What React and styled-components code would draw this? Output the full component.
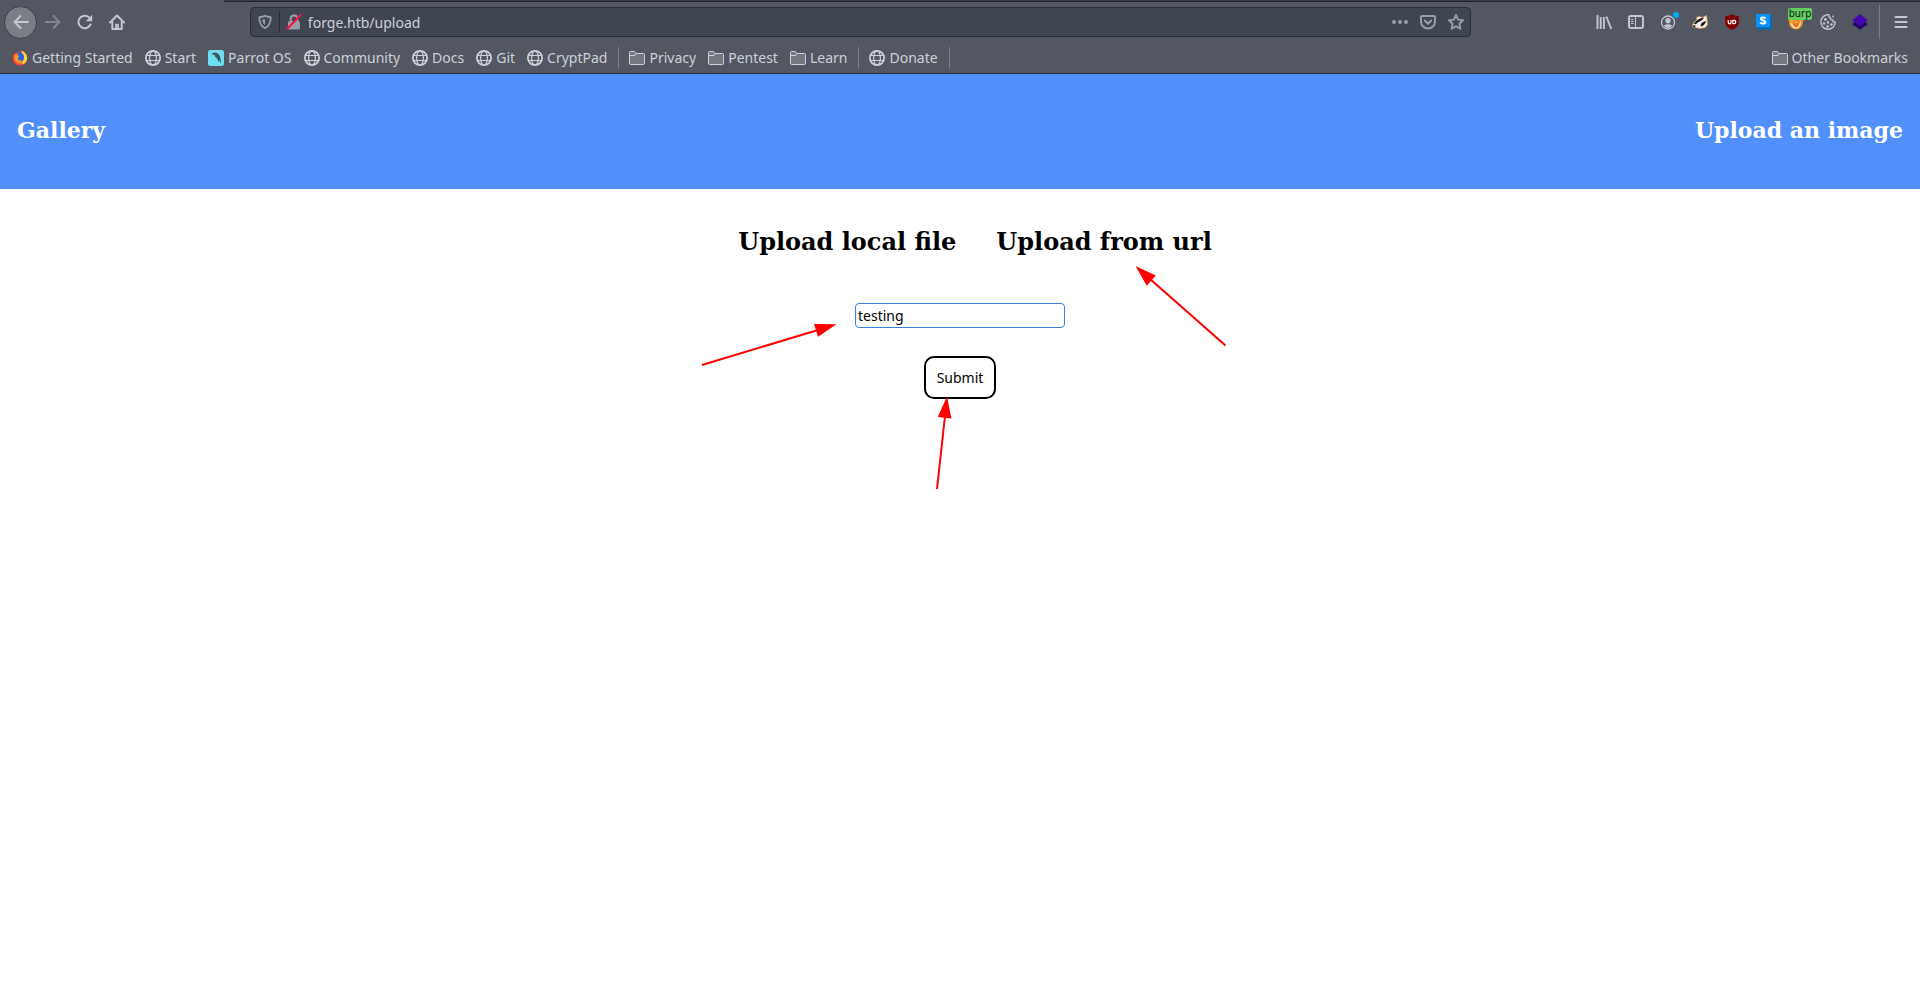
import React, { useState } from "react";
import styled, { createGlobalStyle } from "styled-components";

const Global = createGlobalStyle`
  * { box-sizing: border-box; }
  body { margin: 0; background: #fff; color: #000; font-family: "DejaVu Serif", serif; }
  button, input { font-family: "Noto Sans", sans-serif; }
`;

const Page = styled.div`
  display: flex;
  flex-direction: column;
  min-height: 100vh;
`;
const Chrome = styled.header`
  background: #535761;
  border-bottom: 1px solid #2a2e39;
  font-family: "Noto Sans", sans-serif;
  color: #cdd1da;
`;
const TabStrip = styled.div`
  height: 2px;
  margin-left: 224px;
  background: #383c47;
  border-bottom: 1px solid #20232b;
`;
const Toolbar = styled.nav`
  display: flex;
  align-items: center;
  height: 40px;
  padding: 0 3px 0 4px;
`;
const ToolButton = styled.button`
  display: flex;
  align-items: center;
  justify-content: center;
  flex: none;
  width: 32px;
  height: 32px;
  padding: 0;
  border: 0;
  background: none;
  color: #c3c7d1;
  opacity: ${(p) => (p.$dim ? 0.4 : 1)};
`;
const BackButton = styled(ToolButton)`
  width: 33px;
  height: 33px;
  border: 1px solid #3b3f4a;
  border-radius: 50%;
  background: #7b7e86;
`;
const Spacer = styled.div`
  flex: 117 1 0;
`;
const UrlBar = styled.div`
  flex: 1221 1 0;
  display: flex;
  align-items: center;
  height: 30px;
  border: 1px solid #2a2e39;
  border-radius: 4px;
  background: #404552;
  color: #9a9eaa;
`;
const UrlButton = styled.button`
  display: flex;
  align-items: center;
  justify-content: center;
  flex: none;
  width: 28px;
  height: 28px;
  padding: 0;
  border: 0;
  background: none;
  color: inherit;
`;
const UrlDivider = styled.div`
  width: 1px;
  height: 22px;
  background: #2a2e39;
`;
const UrlInput = styled.input`
  flex: 1;
  min-width: 0;
  height: 28px;
  padding: 0;
  border: 0;
  outline: 0;
  background: none;
  color: #cdd1da;
  font-size: 14px;
`;
const ToolDivider = styled.div`
  width: 1px;
  height: 34px;
  margin: 0 5px 0 3px;
  background: #777b85;
`;
const BadgeHolder = styled(ToolButton)`
  position: relative;
`;
const Badge = styled.span`
  position: absolute;
  top: 2px;
  right: 0;
  width: 24px;
  height: 12px;
  border-radius: 2px;
  background: #62cf62;
  color: #111;
  font-size: 10px;
  line-height: 11px;
  text-align: center;
`;
const Bookmarks = styled.nav`
  display: flex;
  align-items: center;
  height: 31px;
  padding: 0 6px;
`;
const Bookmark = styled.a`
  display: flex;
  align-items: center;
  gap: 4px;
  padding: 0 6px;
  color: inherit;
  font-size: 14px;
  line-height: 20px;
  text-decoration: none;
  white-space: nowrap;
`;
const BookmarkDivider = styled.div`
  width: 1px;
  height: 21px;
  margin: 0 4px 0 5px;
  background: #7d818b;
`;
const Grow = styled.div`
  flex: 1;
`;
const Banner = styled.div`
  display: flex;
  align-items: center;
  justify-content: space-between;
  height: 115px;
  padding: 0 17px 4px;
  background: #5190fb;
`;
const BannerLink = styled.a`
  color: #fff;
  font-size: 22px;
  font-weight: bold;
  line-height: 26px;
  text-decoration: none;
`;
const Content = styled.main`
  position: relative;
  display: flex;
  flex: 1;
  flex-direction: column;
  align-items: center;
  padding-top: 38px;
`;
const Choices = styled.div`
  display: flex;
  gap: 40px;
  padding-left: 30px;
`;
const Choice = styled.button`
  padding: 0;
  border: 0;
  background: none;
  color: #000;
  font-family: "DejaVu Serif", serif;
  font-size: 24px;
  font-weight: bold;
  line-height: 30px;
`;
const Form = styled.form`
  display: flex;
  flex-direction: column;
  align-items: center;
  gap: 28px;
  margin-top: 46px;
`;
const Field = styled.input`
  width: 210px;
  height: 25px;
  padding: 0 2px;
  border: 1px solid #3584e4;
  border-radius: 4px;
  outline: 0;
  background: #fff;
  color: #000;
  font-size: 14px;
`;
const Submit = styled.button`
  width: 72px;
  height: 43px;
  padding: 0;
  border: 2px solid #000;
  border-radius: 10px;
  background: #fff;
  color: #000;
  font-size: 14px;
`;
const Arrows = styled.svg`
  position: absolute;
  top: 71px;
  left: 50%;
  width: 540px;
  height: 240px;
  margin-left: -265px;
  pointer-events: none;
`;

const Icon = ({ children, size = 16 }) => (
  <svg width={size} height={size} viewBox="0 0 16 16" fill="none" stroke="currentColor" strokeWidth="2" strokeLinecap="round" strokeLinejoin="round" overflow="visible" aria-hidden="true">
    {children}
  </svg>
);

const Globe = () => (
  <Icon>
    <circle cx="8" cy="8" r="7.1" strokeWidth="1.8" />
    <ellipse cx="8" cy="8" rx="3.4" ry="7" strokeWidth="1.2" />
    <path d="M1.500 5.500h13M1.500 10.500h13" strokeWidth="1.2" />
  </Icon>
);
const Folder = () => (
  <Icon>
    <path d="M.5 13.500v-11q0-1 1-1h4l1.500 2h7.500q1 0 1 1v9q0 1-1 1h-13q-1 0-1-1z" fill="#737780" strokeWidth="1" />
    <path d="M.8 5.500h5l1.300-2" strokeWidth="1" />
  </Icon>
);
const Firefox = () => (
  <Icon>
    <g stroke="none">
      <path d="M8 1.500C12 .5 15.500 4 15.200 8.500A7.200 7 0 0 1 8 15.500C4 15.500.8 12.500.8 8.600.8 6 1.500 4 3 2.200l.4 1.800 2-1.500z" fill="#ff3b3f" />
      <path d="M9.500.5c2.500 1 5.700 4 5.700 7.500 0 3-1.700 5-4 6.200L8 12l3-4z" fill="#ffd53a" />
      <path d="M2 6c2-3 5-3 7-1l3 4-2 4c-3 1.500-7 0-7.500-3z" fill="#ff8a16" />
      <path d="M5.500 3C8 1 11.500 3 12 6.500c.4 3-1.500 5-4 5S4.500 10 4.500 8L7 7z" fill="#2464e8" />
      <path d="M3 5.500l4 .8-1.500 1.500 1 2.200 3 .3c-1.500 2-5 1.500-6-1z" fill="#ff9a1f" />
    </g>
  </Icon>
);
const Parrot = () => (
  <Icon>
    <rect width="16" height="16" rx="2.500" fill="#6fe0ef" stroke="none" />
    <path d="M3.500 4.300C5.500 1.500 9.500 2 11.500 5.500c1.200 2.200 1.300 5 1.400 8.300l-1.700-3.600-.5 2.300C10.200 9.500 9 8 7 6.500L6.500 5z" fill="#3c5560" stroke="none" />
  </Icon>
);

const bookmarkGroups = [
  [["Getting Started", Firefox], ["Start", Globe], ["Parrot OS", Parrot], ["Community", Globe], ["Docs", Globe], ["Git", Globe], ["CryptPad", Globe]],
  [["Privacy", Folder], ["Pentest", Folder], ["Learn", Folder]],
  [["Donate", Globe]],
];

const BookmarkItem = ({ label, Glyph }) => (
  <Bookmark href="#"><Glyph />{label}</Bookmark>
);

const extensions = [
  ["Library", (
    <Icon><path d="M1.500 1v14M4.700 3v12M7.900 3v12M10.300 2.500l5 12.500" strokeLinecap="butt" strokeWidth="1.900" /></Icon>
  )],
  ["Sidebars", (
    <Icon><rect x="1" y="2" width="14" height="12" rx="2" /><path d="M7.500 2v12" strokeWidth="1" /><path d="M3 5.500h2.500M3 7.500h2.500M3 9.500h2.500" strokeWidth="1" strokeLinecap="butt" /></Icon>
  )],
  ["Account", (
    <Icon>
      <circle cx="8" cy="8.500" r="6.500" strokeWidth="1.300" />
      <circle cx="8" cy="6.800" r="2.700" fill="currentColor" stroke="none" />
      <path d="M3.800 12c1-2.500 7.400-2.500 8.400 0-2 2.500-6.400 2.500-8.400 0z" fill="currentColor" stroke="none" />
      <circle cx="16" cy="1" r="3" fill="#00a8f8" stroke="none" />
    </Icon>
  )],
  ["Privacy Badger", (
    <Icon>
      <path d="M.4 12.300C.8 9.500 2.500 7.500 4.500 6L5 3l3-.5L10 3.500 14.500 1.500l.5 4 .6 5-2.300 3L8 14.500l-4-.7z" fill="#f6f1e8" stroke="#d9944f" strokeWidth=".7" />
      <path d="M2 9.500C4.500 6 8 4.200 12 3.600c-1 2.200-3 3.800-5.500 4.400L3.500 10.500z" fill="#1a1a1a" stroke="none" />
      <path d="M8.500 11.500c.5-2.500 2.500-3.700 5.500-4.500-.2 2.200-1.700 4.200-4.500 5.500z" fill="#1d1a19" stroke="none" />
      <path d="M.5 12.200l2 1 1.300-.6-1.500-1.600z" fill="#1a1a1a" stroke="none" />
    </Icon>
  )],
  ["uBlock Origin", (
    <Icon>
      <path d="M8 .2c2 1.300 4.500 1.900 6.800 2v6c0 3.500-3 6-6.800 7.600C4.200 14.200 1.200 11.700 1.200 8.200v-6C3.500 2.100 6 1.500 8 .2z" fill="#800000" stroke="none" />
      <path d="M4.200 6v2.200q0 1.600 1.400 1.600T7 8.200V6" stroke="#fff" strokeWidth="1.200" strokeLinecap="butt" />
      <path d="M8.800 6.300h1.200q1.800 0 1.800 1.700T10 9.700H8.800z" stroke="#fff" strokeWidth="1.200" />
    </Icon>
  )],
  ["Stylus", (
    <Icon>
      <path d="M0 0h14l2 2v14H3l-3-3z" fill="#0868b2" stroke="none" />
      <path d="M0 0h14v13H0z" fill="#0791fb" stroke="none" />
      <path d="M9.700 4.300Q8.700 3.500 7 3.500c-2.800 0-2.700 2.500 0 2.900 3.500.5 3 3.200 0 3.200q-2 0-3-1" stroke="#fff" strokeLinecap="butt" />
    </Icon>
  )],
  ["FoxyProxy", (
    <Icon>
      <path d="M0 4l6 2h4l6-3-1 5c0 4-3 7.500-7 7.500S1.200 12.500 1 9z" fill="#f09a32" stroke="#965b2b" strokeWidth=".5" />
      <path d="M2.500 9c2 0 3 1 5 1.500l5-3c.8 4-1.500 7-4.500 7S3 12.500 2.500 9z" fill="#f7dfbd" stroke="none" />
      <path d="M4.500 7.500l4 2.500 4-4-2 6.500-3 1-2.500-2z" fill="#e17b22" stroke="none" />
    </Icon>
  ), "burp"],
  ["Cookie editor", (
    <Icon>
      <path d="M9 .9A7.200 7.200 0 1 0 15.200 8c-1.400.5-2.700-.5-2.500-2-1.700.2-2.700-1-2.200-2.400C9 3.500 8.300 2.200 9 .9z" strokeWidth="1.400" />
      <g fill="currentColor" stroke="none"><circle cx="5.500" cy="5.500" r="1.400" /><circle cx="4" cy="9.500" r="1.200" /><circle cx="8" cy="8.500" r="1.300" /><circle cx="7.500" cy="12.500" r="1.300" /><circle cx="11.500" cy="10.500" r="1.300" /><circle cx="13" cy="2.500" r=".9" /></g>
    </Icon>
  )],
  ["Layers", (
    <Icon>
      <path d="M0 10l3-2h10l3 2-8 5.800z" fill="#260769" stroke="none" />
      <path d="M8 0l8 6.300L8 12.300 0 6.300z" fill="#4608ad" stroke="none" />
    </Icon>
  )],
];

const Browser = () => {
  const [url, setUrl] = useState("forge.htb/upload");
  return (
    <Chrome>
      <TabStrip />
      <Toolbar aria-label="Navigation">
        <BackButton aria-label="Back"><Icon><path d="M15 8H1.500M7.500 2L1.500 8l6 6" /></Icon></BackButton>
        <ToolButton $dim aria-label="Forward"><Icon><path d="M1 8h13.500M8.500 2l6 6-6 6" /></Icon></ToolButton>
        <ToolButton aria-label="Reload">
          <Icon><path d="M13.500 10.500A6.300 6.300 0 1 1 12 3.300L14 5" /><path d="M15.200.8v6.400H8.800z" fill="currentColor" stroke="none" /></Icon>
        </ToolButton>
        <ToolButton aria-label="Home">
          <Icon><path d="M1 8.500L8 1.500l7 7" /><path d="M3.300 8v7h9.400V8" /><path d="M7 14v-3.500h2V14" strokeWidth="1.700" strokeLinecap="butt" /></Icon>
        </ToolButton>
        <Spacer />
        <UrlBar>
          <UrlButton aria-label="Tracking protection">
            <Icon size={14}><path d="M8 1C10 2 12 2.400 14.500 2.500c0 6-1 10-6.500 12.500C2.500 12.500 1.500 8.500 1.500 2.500 4 2.400 6 2 8 1z" /><path d="M8 4.500c-1 .4-2 .6-3 .7.2 3 .9 5 3 6.300z" fill="currentColor" stroke="none" /></Icon>
          </UrlButton>
          <UrlDivider />
          <UrlButton aria-label="Connection not secure">
            <Icon><path d="M4.700 7V4.500q0-3 3.300-3t3.300 3V7" /><rect x="2" y="7" width="12" height="8.500" rx="1.500" fill="currentColor" stroke="none" /><path d="M1.500 14.500L14.500 1" stroke="#f8103c" /></Icon>
          </UrlButton>
          <UrlInput aria-label="Address" value={url} onChange={(e) => setUrl(e.target.value)} />
          <UrlButton aria-label="Page actions"><Icon><g fill="currentColor" stroke="none"><circle cx="2" cy="8" r="2" /><circle cx="8" cy="8" r="2" /><circle cx="14" cy="8" r="2" /></g></Icon></UrlButton>
          <UrlButton aria-label="Save to Pocket"><Icon><path d="M2 2h12q1 0 1 1v4.500a7 7 0 0 1-14 0V3q0-1 1-1z" /><path d="M4.800 6.500L8 9.700l3.200-3.200" /></Icon></UrlButton>
          <UrlButton aria-label="Bookmark this page"><Icon><path d="M8 1l2.100 4.600 4.900.6-3.600 3.500.9 5L8 12.300 3.700 14.700l.9-5L1 6.200l4.900-.6z" strokeWidth="1.900" /></Icon></UrlButton>
        </UrlBar>
        <Spacer />
        {extensions.map(([name, glyph, badge]) => (
          <BadgeHolder key={name} aria-label={name}>{glyph}{badge && <Badge>{badge}</Badge>}</BadgeHolder>
        ))}
        <ToolDivider />
        <ToolButton aria-label="Menu"><Icon><path d="M2.500 3h11M2.500 8h11M2.500 13h11" /></Icon></ToolButton>
      </Toolbar>
      <Bookmarks aria-label="Bookmarks">
        {bookmarkGroups.map((group, i) => (
          <React.Fragment key={i}>
            {group.map(([label, Glyph]) => <BookmarkItem key={label} label={label} Glyph={Glyph} />)}
            <BookmarkDivider />
          </React.Fragment>
        ))}
        <Grow />
        <BookmarkItem label="Other Bookmarks" Glyph={Folder} />
      </Bookmarks>
    </Chrome>
  );
};

export default function App() {
  const [value, setValue] = useState("testing");
  return (
    <Page>
      <Global />
      <Browser />
      <Banner>
        <BannerLink href="#">Gallery</BannerLink>
        <BannerLink href="#">Upload an image</BannerLink>
      </Banner>
      <Content>
        <Choices>
          <Choice type="button">Upload local file</Choice>
          <Choice type="button">Upload from url</Choice>
        </Choices>
        <Form onSubmit={(e) => e.preventDefault()}>
          <Field aria-label="Image url" value={value} onChange={(e) => setValue(e.target.value)} />
          <Submit type="submit">Submit</Submit>
        </Form>
        <Arrows viewBox="695 260 540 240" fill="#f00" stroke="#f00" strokeWidth="2" aria-hidden="true">
          <path d="M702 365L818 330M1225.500 345.500L1150 279M937 489L945 416" />
          <path stroke="none" d="M836.500 324.300L814 324l4 12.700zM1135.500 266l20.300 9.500-9 10.200zM947 396.500l-9.200 20.500 13.600 1.500z" />
        </Arrows>
      </Content>
    </Page>
  );
}
